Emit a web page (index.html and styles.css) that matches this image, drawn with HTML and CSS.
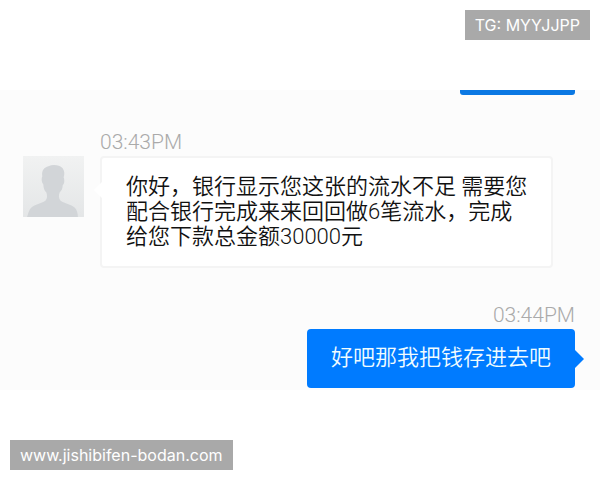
FILE: index.html
```
<!DOCTYPE html>
<html lang="zh-CN">

<head>
	<meta charset="utf-8">
	<title>Chat</title>
	<meta name="viewport" content="width=device-width, initial-scale=1.0">

	<link rel="stylesheet" href="styles.css">
</head>

<body>
	<header class="top">
		<span class="tag">TG: MYYJJPP</span>
	</header>

	<main class="chat">
		<div class="bubble-end"></div>

		<div class="message received">
			<svg class="avatar" viewBox="0 0 60 60" role="img" aria-label="avatar">
				<defs>
					<linearGradient id="shade" x1="0" y1="0" x2="0" y2="1">
						<stop offset="0" stop-color="#f1f2f2" />
						<stop offset="1" stop-color="#e4e6e7" />
					</linearGradient>
				</defs>
				<rect width="60" height="60" fill="url(#shade)" />
				<path fill="#d2d5d8" d="M4 60C5 57 6 53 8 51C12 47 18 47 22 44C24 42 24 39 23 36C21 34 20 31 20 28C18 26 18 22 19 20C18 14 21 11 25 10C30 8 36 9 39 12C41 15 41 18 40 21C41 24 41 27 39 29C39 32 38 34 36 36C35 39 35 42 37 44C41 47 47 47 51 51C53 53 54 57 54 60Z" />
			</svg>
			<div class="content">
				<time class="time">03:43PM</time>
				<p class="bubble">你好，银行显示您这张的流水不足 需要您<br>配合银行完成来来回回做6笔流水，完成<br>给您下款总金额30000元</p>
			</div>
		</div>

		<div class="message sent">
			<div class="content">
				<time class="time">03:44PM</time>
				<p class="bubble">好吧那我把钱存进去吧</p>
			</div>
		</div>
	</main>

	<footer class="bottom">
		<span class="tag">www.jishibifen-bodan.com</span>
	</footer>
</body>

</html>
```
FILE: styles.css
```
* {
	box-sizing: border-box;
}

body {
	background-color: #fff;
	font-family: Roboto, 'Noto Sans CJK SC', sans-serif;
	font-weight: 300;
	margin: 0;
}

.top {
	display: flex;
	justify-content: flex-end;
	padding: 10px 10px 50px;
}

.bottom {
	display: flex;
	padding: 50px 10px 10px;
}

.tag {
	background-color: #a9a9a9;
	color: #fff;
	font-family: Inter, sans-serif;
	font-size: 16px;
	font-weight: 400;
	line-height: 30px;
	padding: 0 10px;
}

.chat {
	background-color: #fcfcfc;
	display: flex;
	flex-direction: column;
	padding: 0 25px 2px 23px;
}

/* bottom edge of the previous sent message */
.bubble-end {
	align-self: flex-end;
	background-color: #0b78e3;
	border-radius: 0 0 3px 3px;
	height: 5px;
	width: 115px;
}

.message {
	display: flex;
}

.received {
	gap: 16px;
	margin-top: 35px;
}

.sent {
	justify-content: flex-end;
	margin-top: 35px;
}

.avatar {
	flex: none;
	height: 61px;
	margin-top: 26px;
	width: 61px;
}

.content {
	display: flex;
	flex-direction: column;
	gap: 2px;
}

.time {
	color: #aaa;
	font-size: 21px;
	line-height: 24px;
}

.sent .time {
	text-align: right;
}

.bubble {
	border-radius: 4px;
	font-size: 22px;
	font-weight: 350;
	line-height: 25px;
	margin: 0;
	position: relative;
}

.received .bubble {
	background-color: #fff;
	border: 2px solid #f4f4f4;
	color: #111;
	padding: 16px 24px 17px;
}

.received .bubble::before {
	border: 8px solid transparent;
	border-left: 0;
	border-right-color: #fff;
	content: '';
	left: -8px;
	position: absolute;
	top: 24px;
}

.sent .bubble {
	background-color: #007bff;
	color: #f0fcff;
	padding: 16px 24px 18px;
}

.sent .bubble::after {
	border: 9px solid transparent;
	border-left-color: #007bff;
	border-right: 0;
	content: '';
	position: absolute;
	right: -9px;
	top: 21px;
}
```
